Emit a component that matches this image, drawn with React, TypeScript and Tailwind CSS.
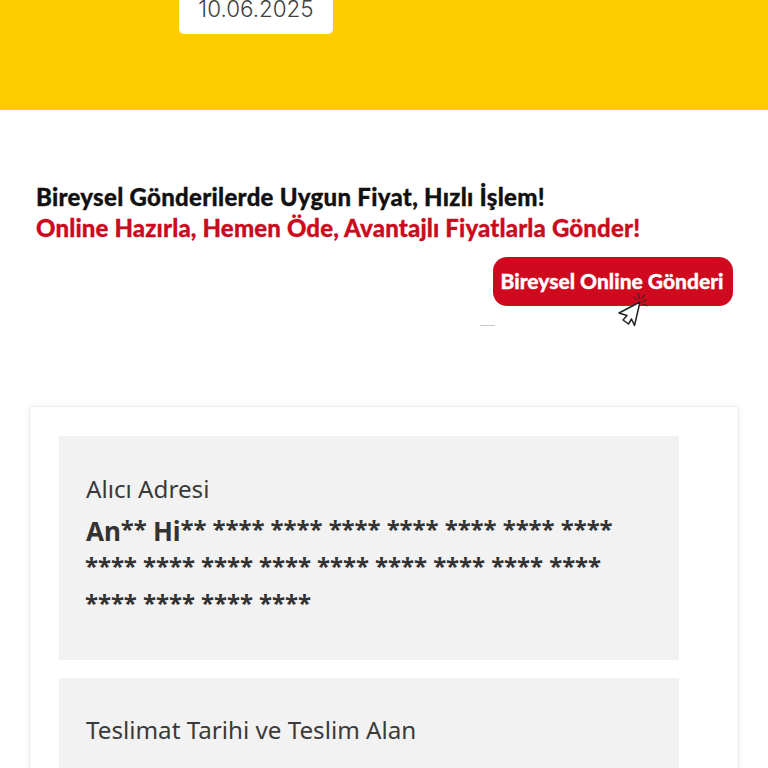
const SANS = "font-['Noto_Sans',sans-serif]"

function Cursor() {
  return (
    <svg className="absolute left-[120px] top-[30px]" width="40" height="45" viewBox="0 0 40 45" fill="none">
      {/* click sparks */}
      <path
        d="M20.300 9.700L23.700 13M25.300 6.300L26.300 12.300M32 7L28.700 12.300M33.700 13L29.700 14.700M34.300 19L29.700 17"
        stroke="#222"
        strokeWidth="1"
      />
      <path
        d="M27 15L6 26L14 28.500L10 33L15.500 37L18.500 32L21.500 38.500Z"
        fill="#fff"
        stroke="#222"
        strokeWidth="1.500"
        strokeLinejoin="round"
      />
    </svg>
  )
}

export default function App() {
  return (
    <div className={`h-[768px] overflow-hidden bg-white ${SANS}`}>
      {/* Yellow tracking header */}
      <div className="flex h-[110px] items-start bg-[#ffcc00] pl-[179px]">
        <div className="-mt-[17px] flex h-[51px] w-[154px] items-center justify-center rounded-[5px] bg-white font-['Inter',sans-serif] text-[22.400px] font-[350] text-[#3f3f3f]">
          10.06.2025
        </div>
      </div>

      {/* Campaign banner */}
      <div className="relative h-[296px] pl-[36px] pr-[35px] pt-[71px] font-['Lato',sans-serif] font-black [-webkit-text-stroke:0.3px]">
        <div className="whitespace-nowrap text-[24px] leading-[31px] tracking-[0.28px] text-[#111111]">
          Bireysel Gönderilerde Uygun Fiyat, Hızlı İşlem!
        </div>
        <div className="whitespace-nowrap text-[24px] leading-[31px] tracking-[0.15px] text-[#cc0a1e]">
          Online Hazırla, Hemen Öde, Avantajlı Fiyatlarla Gönder!
        </div>
        <div className="mt-[14px] flex justify-end">
          <div className="relative flex h-[49px] w-[240px] items-center justify-center rounded-[14px] bg-[#cf0a1f] pb-[2px] pr-[2px] text-[21px] whitespace-nowrap text-white">
            Bireysel Online Gönderi
            <Cursor />
          </div>
        </div>
        <div className="absolute left-[480px] top-[215px] h-px w-[15px] bg-[#c9c9c9]" />
      </div>

      {/* Shipment detail card */}
      <div className="ml-[29px] w-[710px] rounded-[3px] border border-[#ececec] bg-white pb-10 pl-[29px] pt-[29px] shadow-[0_0_6px_rgba(0,0,0,0.06)]">
        <div className="h-[224px] w-[620px] bg-[#f2f2f2] px-[27px] pt-[36px] text-[#333333]">
          <div className="text-[24.200px] leading-[33px] text-[#3a3a3a]">Alıcı Adresi</div>
          <div className="mt-[5px] -ml-px w-[560px] text-[24px] leading-[37px] font-bold tracking-[-0.05px] break-words">
            <span className="ml-px align-[-3px] text-[26px] leading-none">An</span>** <span className="align-[-3px] text-[26px] leading-none">Hi</span>** **** **** **** **** **** **** **** **** **** **** **** **** **** **** **** **** **** **** **** ****
          </div>
        </div>
        <div className="mt-[18px] h-[200px] w-[620px] bg-[#f2f2f2] px-[27px] pt-[35px]">
          <div className="text-[24.200px] leading-[33px] text-[#3a3a3a]">Teslimat Tarihi ve Teslim Alan</div>
        </div>
      </div>
    </div>
  )
}
